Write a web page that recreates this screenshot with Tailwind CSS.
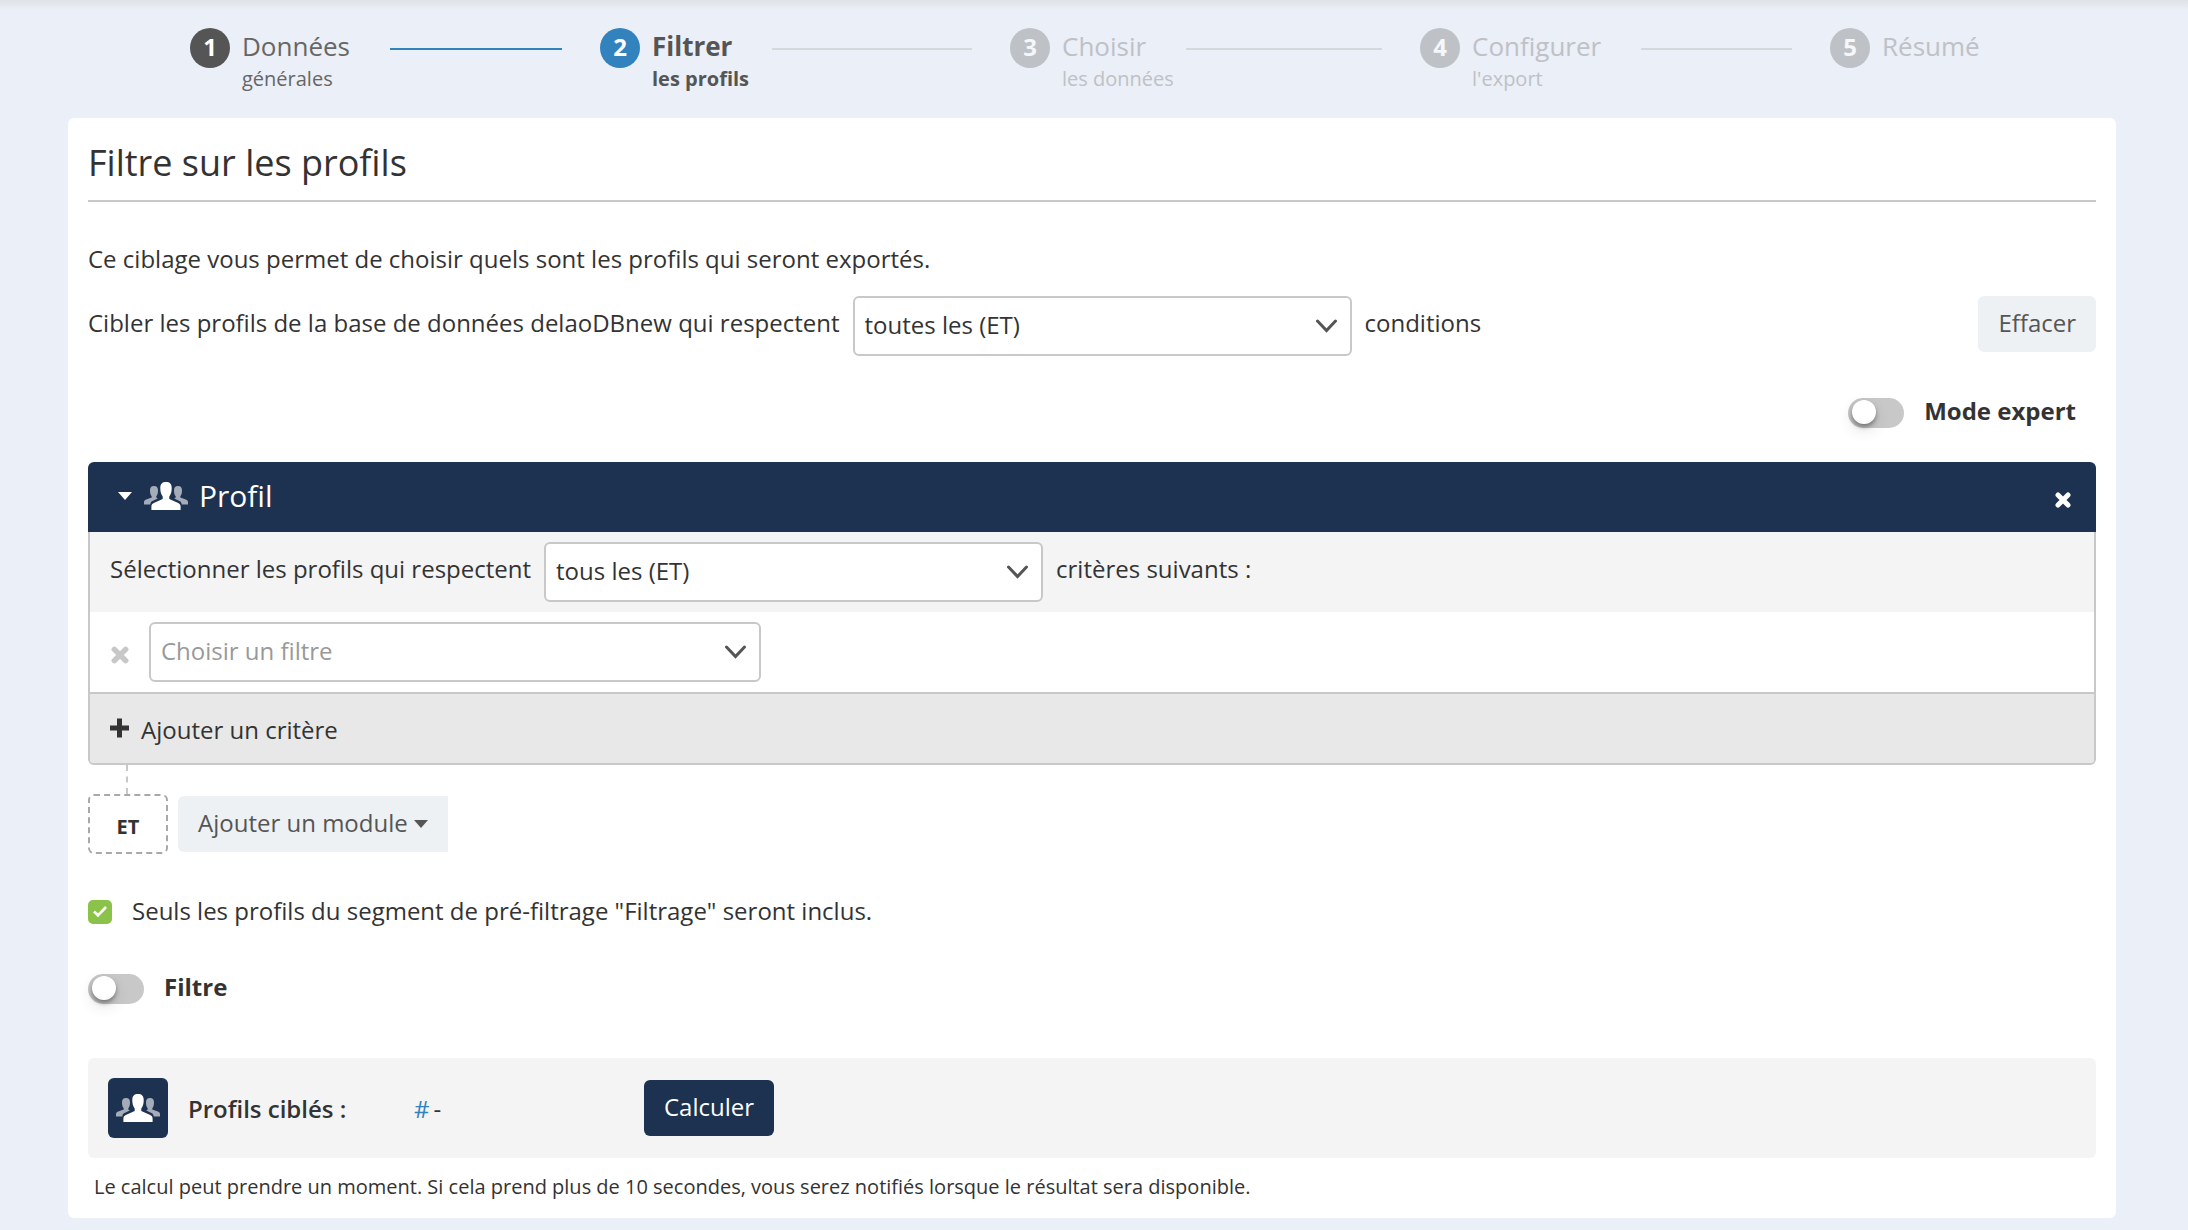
<!DOCTYPE html>
<html lang="fr">
<head>
<meta charset="utf-8">
<meta name="viewport" content="width=device-width, initial-scale=1">
<title>Filtre sur les profils</title>
<script src="https://cdn.jsdelivr.net/npm/@tailwindcss/browser@4"></script>
</head>
<body class="min-h-screen bg-[#ebeff7] font-['Open_Sans',sans-serif] text-2xl text-[#333]">
<svg class="hidden" aria-hidden="true">
  <symbol id="people" viewBox="0 0 44 28">
    <g fill="currentColor" opacity=".6">
      <path d="M10 4c2.700 0 4 1.600 4 4.200 0 3-.6 4.800-1.700 6v1.300l1.500.9-5.800 2.900c-1 .6-1.500 1.500-1.700 3.200H0v-2.300c0-1.300.5-2 1.600-2.500L7.700 15.600v-1.400c-1.100-1.200-1.700-3-1.700-6C6 5.600 7.300 4 10 4z"/>
      <path d="M34 4c-2.700 0-4 1.600-4 4.200 0 3 .6 4.800 1.700 6v1.300l-1.500.9 5.800 2.900c1 .6 1.500 1.500 1.700 3.200H44v-2.300c0-1.300-.5-2-1.600-2.500l-6.100-2.100v-1.400c1.100-1.200 1.700-3 1.700-6C38 5.600 36.700 4 34 4z"/>
    </g>
    <path fill="currentColor" d="M22 0c3.700 0 5.700 2 5.700 5.800 0 3.600-.5 6.300-2.400 8.700v2.500l8.400 3.700c2 1 2.900 1.800 2.900 3.800V28H7.400v-3.500c0-2 .9-2.800 2.900-3.800l8.400-3.700v-2.500C16.800 12.100 16.300 9.400 16.300 5.800 16.300 2 18.300 0 22 0z"/>
  </symbol>
  <symbol id="cross" viewBox="0 0 16 16">
    <path d="M3 3l10 10M13 3L3 13" fill="none" stroke="currentColor" stroke-width="5" stroke-linecap="round"/>
  </symbol>
  <symbol id="chevron" viewBox="0 0 22 14">
    <path d="M1.500 2l9 9.500 9-9.500" fill="none" stroke="currentColor" stroke-width="3" stroke-linecap="round"/>
  </symbol>
  <symbol id="caret" viewBox="0 0 14 8">
    <path d="M0 0h14L7 8z" fill="currentColor"/>
  </symbol>
</svg>

<div class="h-[10px] bg-linear-to-b from-[#dfe2e6] to-[#ebeff7]"></div>

<div class="pr-[72px] pl-[68px]">
  <nav aria-label="Étapes" class="pt-[18px]">
    <ol class="flex h-[90px] pl-[122px]">
      <li class="flex flex-1 gap-3">
        <span class="size-10 shrink-0 rounded-full bg-[#555] text-center leading-[37px] font-bold text-white">1</span>
        <div class="flex-1">
          <div class="flex items-center gap-10 pr-[38px]"><span class="text-[26px] leading-9 text-[#666]">Données</span><span class="mt-[6px] h-[2px] flex-1 bg-[#3182bd]"></span></div>
          <div class="text-xl leading-[30px] text-[#666]">générales</div>
        </div>
      </li>
      <li class="flex flex-1 gap-3" aria-current="step">
        <span class="size-10 shrink-0 rounded-full bg-[#3182bd] text-center leading-[37px] font-bold text-white">2</span>
        <div class="flex-1 font-bold text-[#555]">
          <div class="flex items-center gap-10 pr-[38px]"><span class="text-[26px] leading-9">Filtrer</span><span class="mt-[6px] h-[2px] flex-1 bg-[#d5d8db]"></span></div>
          <div class="text-xl leading-[30px]">les profils</div>
        </div>
      </li>
      <li class="flex flex-1 gap-3">
        <span class="size-10 shrink-0 rounded-full bg-[#bec1c6] text-center leading-[37px] font-bold text-[#f5f7fb]">3</span>
        <div class="flex-1 text-[#bec1c6]">
          <div class="flex items-center gap-10 pr-[38px]"><span class="text-[26px] leading-9">Choisir</span><span class="mt-[6px] h-[2px] flex-1 bg-[#d5d8db]"></span></div>
          <div class="text-xl leading-[30px]">les données</div>
        </div>
      </li>
      <li class="flex flex-1 gap-3">
        <span class="size-10 shrink-0 rounded-full bg-[#bec1c6] text-center leading-[37px] font-bold text-[#f5f7fb]">4</span>
        <div class="flex-1 text-[#bec1c6]">
          <div class="flex items-center gap-10 pr-[38px]"><span class="text-[26px] leading-9">Configurer</span><span class="mt-[6px] h-[2px] flex-1 bg-[#d5d8db]"></span></div>
          <div class="text-xl leading-[30px]">l'export</div>
        </div>
      </li>
      <li class="flex w-[286px] gap-3">
        <span class="size-10 shrink-0 rounded-full bg-[#bec1c6] text-center leading-[37px] font-bold text-[#f5f7fb]">5</span>
        <span class="text-[26px] leading-9 text-[#bec1c6]">Résumé</span>
      </li>
    </ol>
  </nav>

  <main class="rounded-md bg-white px-5 pt-5 pb-[14px]">
    <h1 class="border-b-2 border-[#c8c8c8] pb-3 text-4xl leading-[50px]">Filtre sur les profils</h1>
    <p class="mt-10 leading-[34px]">Ce ciblage vous permet de choisir quels sont les profils qui seront exportés.</p>

    <div class="mt-5 flex items-start gap-[13px]">
      <label for="conditions" class="leading-[54px]">Cibler les profils de la base de données delaoDBnew qui respectent</label>
      <div class="relative w-[499px]">
        <select id="conditions" class="block h-[60px] w-full appearance-none rounded-md border-2 border-[#c8c8c8] bg-white pr-12 pb-[2px] pl-[10px]"><option>toutes les (ET)</option><option>au moins une (OU)</option></select>
        <svg class="pointer-events-none absolute top-[23px] right-[14px] h-[14px] w-[22px] text-[#555]"><use href="#chevron"/></svg>
      </div>
      <span class="leading-[54px]">conditions</span>
      <button type="button" class="ml-auto h-14 rounded-md bg-[#edf1f4] px-5 pb-[2px] text-[#555]">Effacer</button>
    </div>

    <div class="mt-10 flex h-[34px] items-center justify-end gap-5 pr-5">
      <input id="expert" type="checkbox" role="switch" class="h-[30px] w-14 appearance-none rounded-full bg-[#c8c8c8] px-1 pt-[2px] before:block before:size-6 before:rounded-full before:bg-white before:shadow-[0_3px_4px_rgba(0,0,0,0.35),0_6px_16px_rgba(0,0,0,0.12)] checked:bg-[#8bc34a] checked:before:ml-6">
      <label for="expert" class="pb-1 leading-[30px] font-bold">Mode expert</label>
    </div>

    <section class="mt-8">
      <header class="flex h-[70px] items-center rounded-t-md bg-[#1d3150] px-[25px] text-white">
        <button type="button" aria-label="Replier" class="mr-3 mb-[2px] ml-[5px]"><svg class="h-2 w-[14px]"><use href="#caret"/></svg></button>
        <svg class="mb-[2px] h-7 w-11"><use href="#people"/></svg>
        <h2 class="ml-[11px] pb-[2px] text-3xl leading-10">Profil</h2>
        <button type="button" aria-label="Fermer" class="mt-[6px] ml-auto"><svg class="size-4"><use href="#cross"/></svg></button>
      </header>
      <div class="overflow-hidden rounded-b-md border-2 border-t-0 border-[#c8c8c8]">
        <div class="flex h-20 items-start gap-[13px] bg-[#f4f4f4] px-5 pt-[10px]">
          <label for="criteres" class="leading-[54px]">Sélectionner les profils qui respectent</label>
          <div class="relative w-[499px]">
            <select id="criteres" class="block h-[60px] w-full appearance-none rounded-md border-2 border-[#c8c8c8] bg-white pr-12 pb-[2px] pl-[10px]"><option>tous les (ET)</option><option>au moins un (OU)</option></select>
            <svg class="pointer-events-none absolute top-[23px] right-[14px] h-[14px] w-[22px] text-[#555]"><use href="#chevron"/></svg>
          </div>
          <span class="leading-[54px]">critères suivants :</span>
        </div>
        <div class="flex h-20 items-center gap-5 px-[21px]">
          <button type="button" aria-label="Supprimer le critère" class="mt-[6px] text-[#c8c8c8]"><svg class="size-[18px]"><use href="#cross"/></svg></button>
          <div class="relative w-[612px]">
            <select aria-label="Filtre du critère" class="block h-[60px] w-full appearance-none rounded-md border-2 border-[#c8c8c8] bg-white pr-12 pb-[2px] pl-[10px] text-[#999]"><option>Choisir un filtre</option></select>
            <svg class="pointer-events-none absolute top-[23px] right-[14px] h-[14px] w-[22px] text-[#555]"><use href="#chevron"/></svg>
          </div>
        </div>
        <button type="button" class="flex h-[71px] w-full items-center gap-[11px] border-t-2 border-[#c8c8c8] bg-[#e8e8e8] px-5 pt-[2px]">
          <svg class="mb-1 size-5" viewBox="0 0 20 20"><path d="M9.500 3v14M2.500 10h14" stroke="currentColor" stroke-width="5" stroke-linecap="square"/></svg>
          Ajouter un critère
        </button>
      </div>
      <div class="ml-[38px] h-[29px] w-0 border-l-2 border-dashed border-[#c8c8c8]"></div>
      <div class="flex items-center gap-[10px]">
        <div class="h-[60px] w-20 rounded-md border-2 border-dashed border-[#a8a8a8] pt-[5px] text-center text-xl leading-[52px] font-bold">ET</div>
        <button type="button" class="flex h-14 items-center gap-[6px] rounded-l-md bg-[#edf1f4] px-5 pb-[2px] text-[#555]">Ajouter un module<svg class="mt-[2px] h-2 w-[14px]"><use href="#caret"/></svg></button>
      </div>
    </section>

    <div class="mt-10 flex h-9 items-center gap-5">
      <span class="relative size-6">
        <input id="prefiltrage" type="checkbox" checked class="peer block size-6 appearance-none rounded-[5px] border-2 border-[#8bc34a] checked:bg-[#8bc34a]">
        <svg class="pointer-events-none absolute inset-0 hidden size-6 peer-checked:block" viewBox="0 0 24 24"><path d="M6 11.500l4 4 8-8.500" fill="none" stroke="#fff" stroke-width="2.600"/></svg>
      </span>
      <label for="prefiltrage" class="pb-[2px]">Seuls les profils du segment de pré-filtrage "Filtrage" seront inclus.</label>
    </div>

    <div class="mt-[41px] flex h-9 items-center gap-5">
      <input id="filtre" type="checkbox" role="switch" class="h-[30px] w-14 appearance-none rounded-full bg-[#c8c8c8] px-1 pt-[2px] before:block before:size-6 before:rounded-full before:bg-white before:shadow-[0_3px_4px_rgba(0,0,0,0.35),0_6px_16px_rgba(0,0,0,0.12)] checked:bg-[#8bc34a] checked:before:ml-6">
      <label for="filtre" class="pb-1 leading-[30px] font-bold">Filtre</label>
    </div>

    <div class="mt-[51px] flex h-[100px] items-center rounded-md bg-[#f4f4f4] px-5">
      <span class="mr-5 flex size-[60px] items-center justify-center rounded-md bg-[#1d3150] text-white"><svg class="h-7 w-11"><use href="#people"/></svg></span>
      <span class="w-[226px] pt-[2px] font-semibold">Profils ciblés :</span>
      <span class="w-[230px] pt-[2px]"><a href="#" class="text-[#3182bd]">#</a><span class="ml-1">-</span></span>
      <button type="button" class="h-14 rounded-md bg-[#1d3150] px-5 pb-[2px] text-white">Calculer</button>
    </div>
    <p class="mt-3 px-[6px] text-xl leading-[34px]">Le calcul peut prendre un moment. Si cela prend plus de 10 secondes, vous serez notifiés lorsque le résultat sera disponible.</p>
  </main>
</div>
</body>
</html>
